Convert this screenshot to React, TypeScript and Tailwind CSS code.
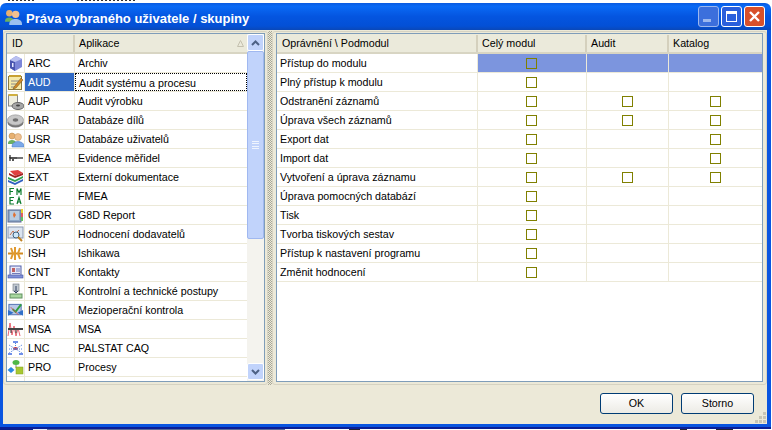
import React from "react";

function IconArc() { return <svg width="17" height="17" viewBox="0 0 17 17"><path d="M3 5 L9 1 L15 4 V12 L8 16 L3 13 Z" fill="#7c86d8"/><path d="M3 5 L8 7 V16 L3 13 Z" fill="#4a55b0"/><path d="M3 5 L9 1 L15 4 L8 7 Z" fill="#b9c0f0"/><rect x="5" y="8" width="1.5" height="4" fill="#e6e8ff"/></svg>; }
function IconAud() { return <svg width="17" height="17" viewBox="0 0 17 17"><rect x="1.5" y="2.5" width="13" height="13" fill="#f5e9a8" stroke="#8a7a40"/><path d="M2 1h12v2H2z" fill="#c8a030"/><path d="M4 7h8M4 10h6M4 13h5" stroke="#8a8a8a"/><path d="M7 13 L14 4 L16 6 L9 14 L6 15 Z" fill="#d08a2a" stroke="#6a4a10" strokeWidth=".5"/></svg>; }
function IconAup() { return <svg width="17" height="17" viewBox="0 0 17 17"><rect x="1.5" y="2" width="9" height="11" fill="#f0efe0" stroke="#888"/><path d="M1.5 1h9v2h-9z" fill="#d0b040"/><ellipse cx="11" cy="13" rx="6" ry="3.5" fill="#a8a8a8" stroke="#666"/><ellipse cx="11" cy="12.5" rx="2" ry="1" fill="#444"/></svg>; }
function IconPar() { return <svg width="18" height="17" viewBox="0 0 18 17"><ellipse cx="9" cy="10.5" rx="8.5" ry="5.5" fill="#777"/><ellipse cx="9" cy="8" rx="8.5" ry="5.5" fill="#c8c8c8" stroke="#8a8a8a" strokeWidth=".6"/><ellipse cx="9" cy="8" rx="3" ry="1.8" fill="#707070"/></svg>; }
function IconUsr() { return <svg width="17" height="17" viewBox="0 0 17 17"><circle cx="5" cy="5" r="3" fill="#e8b070" stroke="#b08040" strokeWidth=".5"/><path d="M1 12 C1 8 9 8 9 12 V13 H1 Z" fill="#6cb060"/><circle cx="11" cy="6" r="3.5" fill="#f0c090" stroke="#c09050" strokeWidth=".5"/><path d="M5 15 C5 9 17 9 17 15 V16 H5 Z" fill="#7aa8e8" stroke="#4a78c0" strokeWidth=".5"/></svg>; }
function IconMea() { return <svg width="17" height="17" viewBox="0 0 17 17"><path d="M2 7h14v2H7v2H5V9H3z" fill="#555"/><path d="M3 5v6" stroke="#222" strokeWidth="1.2"/><path d="M10 8h6" stroke="#999"/></svg>; }
function IconExt() { return <svg width="17" height="17" viewBox="0 0 17 17"><path d="M3 2 L11 1 L16 4 L8 7 Z" fill="#e04040"/><path d="M2 4 L8 7 V9 L2 6 Z M8 7 L16 4 V6 L8 9 Z" fill="#a02020"/><path d="M1 8 L8 11 L16 7 V9 L8 13 L1 10 Z" fill="#30a050"/><path d="M1 11 L8 14 L16 10 V12 L8 16 L1 13 Z" fill="#3060c0"/></svg>; }
function IconFme() { return <svg width="17" height="18" viewBox="0 0 17 18"><g stroke="#0a7a2a" strokeWidth="1.2" fill="none"><path d="M3 8V1.5h4M3 4.5h3"/><path d="M10 8V1.5l2 4 2-4V8"/><path d="M7 10.5H3V17h4M3 13.5h3"/><path d="M10 17l2-6.5 2 6.5M10.8 15h2.6"/></g></svg>; }
function IconGdr() { return <svg width="17" height="17" viewBox="0 0 17 17"><rect x="1" y="3" width="13" height="12" fill="#8ea8c8" stroke="#5a6a90"/><rect x="3" y="4" width="9" height="9" fill="#b8cce0"/><path d="M7 5 L9 8 L7 11 L6 8Z" fill="#e07030"/><rect x="14" y="2" width="2" height="4" fill="#e8d030"/><rect x="14" y="6" width="2" height="4" fill="#e06060"/><rect x="14" y="10" width="2" height="4" fill="#60c060"/></svg>; }
function IconSup() { return <svg width="17" height="17" viewBox="0 0 17 17"><rect x="1" y="1" width="15" height="11" fill="#dbe4f0" stroke="#8a98b0"/><path d="M3 9 L6 5 L8 8 L12 4" stroke="#c07050" fill="none"/><circle cx="9" cy="9" r="3" fill="#d0e8f8" stroke="#406080"/><path d="M11 11l4 4" stroke="#c08020" strokeWidth="2"/></svg>; }
function IconIsh() { return <svg width="17" height="17" viewBox="0 0 17 17"><path d="M1 8.5h15" stroke="#d08a20" strokeWidth="2"/><path d="M4 3l2 5.5L4 14M8 2v13M13 3l-2 5.5 2 5.5" stroke="#e09a30" strokeWidth="2" fill="none"/></svg>; }
function IconCnt() { return <svg width="17" height="17" viewBox="0 0 17 17"><rect x="3" y="2" width="11" height="11" fill="#e8e8f8" stroke="#5060a8"/><rect x="1" y="11" width="15" height="3" fill="#8090d8" stroke="#4050a0" strokeWidth=".6"/><rect x="5" y="4" width="3" height="4" fill="#c06060"/><path d="M9 5h4M9 7h4M5 9.5h8" stroke="#5060a8" strokeWidth=".8"/></svg>; }
function IconTpl() { return <svg width="17" height="17" viewBox="0 0 17 17"><rect x="6" y="1" width="6" height="7" fill="#c0c8d0" stroke="#707880" strokeWidth=".6"/><path d="M9 3v7M7 8l2 2 2-2" stroke="#304060" fill="none"/><rect x="3" y="11" width="12" height="4" fill="#a8d8a0" stroke="#609060"/></svg>; }
function IconIpr() { return <svg width="18" height="17" viewBox="0 0 18 17"><rect x="2" y="2" width="13" height="11" fill="#b8c8e8" stroke="#5070b0"/><path d="M1 8 L7 11 L1 14Z M17 8 L11 11 L17 14Z" fill="#3070c8"/><path d="M6 7l3 3 6-8" stroke="#30a040" strokeWidth="2" fill="none"/><path d="M4 5l8 8" stroke="#d05050"/></svg>; }
function IconMsa() { return <svg width="17" height="17" viewBox="0 0 17 17"><path d="M1 15 L3 2 L5 14 L7 5 L9 15 L11 7 L13 15" stroke="#e04050" fill="none" strokeWidth=".8"/><path d="M1 7h15v2H1z" fill="#444"/><path d="M4 9v3M9 9v3" stroke="#333"/></svg>; }
function IconLnc() { return <svg width="17" height="17" viewBox="0 0 17 17"><ellipse cx="8.5" cy="8.5" rx="2.5" ry="1.5" fill="#d03030"/><g stroke="#5080e0" strokeDasharray="1 1" fill="none"><path d="M8.5 3v3M2 5l13 8M15 5L2 13M2 9h13"/></g><rect x="6" y="1" width="5" height="2" fill="#7090e8"/><rect x="1" y="13" width="4" height="2" fill="#7090e8"/><rect x="12" y="13" width="4" height="2" fill="#7090e8"/></svg>; }
function IconPro() { return <svg width="17" height="17" viewBox="0 0 17 17"><ellipse cx="9" cy="3.5" rx="3.5" ry="2.5" fill="#50b848"/><path d="M9 6v3" stroke="#888"/><path d="M4 8 L7.5 11 L4 14 L.5 11Z" fill="#2a8ae0"/><rect x="9" y="8" width="7" height="7" fill="#a8c830" stroke="#80a020" strokeWidth=".5"/></svg>; }

const apps: [React.ReactNode, string, string][] = [
  [<IconArc />, "ARC", "Archiv"],
  [<IconAud />, "AUD", "Audit systému a procesu"],
  [<IconAup />, "AUP", "Audit výrobku"],
  [<IconPar />, "PAR", "Databáze dílů"],
  [<IconUsr />, "USR", "Databáze uživatelů"],
  [<IconMea />, "MEA", "Evidence měřidel"],
  [<IconExt />, "EXT", "Externí dokumentace"],
  [<IconFme />, "FME", "FMEA"],
  [<IconGdr />, "GDR", "G8D Report"],
  [<IconSup />, "SUP", "Hodnocení dodavatelů"],
  [<IconIsh />, "ISH", "Ishikawa"],
  [<IconCnt />, "CNT", "Kontakty"],
  [<IconTpl />, "TPL", "Kontrolní a technické postupy"],
  [<IconIpr />, "IPR", "Mezioperační kontrola"],
  [<IconMsa />, "MSA", "MSA"],
  [<IconLnc />, "LNC", "PALSTAT CAQ"],
  [<IconPro />, "PRO", "Procesy"],
];

const perms: [string, number, number][] = [
  ["Přístup do modulu", 0, 0],
  ["Plný přístup k modulu", 0, 0],
  ["Odstranění záznamů", 1, 1],
  ["Úprava všech záznamů", 1, 1],
  ["Export dat", 0, 1],
  ["Import dat", 0, 1],
  ["Vytvoření a úprava záznamu", 1, 1],
  ["Úprava pomocných databází", 0, 0],
  ["Tisk", 0, 0],
  ["Tvorba tiskových sestav", 0, 0],
  ["Přístup k nastavení programu", 0, 0],
  ["Změnit hodnocení", 0, 0],
];

function Check() {
  return <span className="block h-[11px] w-[11px] border border-[#808000]" />;
}

function HeadCell({ w, children }: { w: string; children?: React.ReactNode }) {
  return <div className={`flex h-full shrink-0 items-center border-r-2 border-[#d4d0bd] pl-[4px] ${w}`}>{children}</div>;
}

function Splitter() {
  return <div className="w-[4px] shrink-0 bg-[repeating-conic-gradient(#a8a898_0_25%,#ece9d8_0_50%)] bg-[length:2px_2px]" />;
}

function Grip() {
  return (
    <div className="absolute right-[1px] bottom-[1px] grid grid-cols-3 gap-[1px]">
      <i className="col-start-3 block h-[3px] w-[3px] bg-[#c8c5b4]" />
      <i className="col-start-2 block h-[3px] w-[3px] bg-[#c8c5b4]" />
      <i className="block h-[3px] w-[3px] bg-[#c8c5b4]" />
      <i className="block h-[3px] w-[3px] bg-[#c8c5b4]" />
      <i className="block h-[3px] w-[3px] bg-[#c8c5b4]" />
      <i className="block h-[3px] w-[3px] bg-[#c8c5b4]" />
    </div>
  );
}

export default function App() {
  return (
    <div className="flex h-[430px] w-[772px] flex-col overflow-hidden bg-white font-['Liberation_Sans',sans-serif] text-[10.7px] text-black">
      {/* top edge of the page behind the window */}
      <div className="h-[3px] shrink-0 bg-white">
        <div className="flex h-[2px] gap-[41px] pl-[8px]">
          <i className="block h-[1px] w-[28px] bg-[repeating-linear-gradient(90deg,#333_0_2px,#fff_2px_4px)]" />
          <i className="block h-[1px] w-[60px] bg-[repeating-linear-gradient(90deg,#333_0_2px,#fff_2px_4px)]" />
        </div>
      </div>
      <div className="mr-[1px] flex h-[27px] shrink-0 items-center rounded-t-[6px] bg-[linear-gradient(180deg,#0a5ae0_0%,#0a6af5_12%,#0455e0_50%,#0350d6_85%,#0a48b8_100%)] pr-[6px] pl-[4px]">
        <svg width="18" height="18" viewBox="0 0 17 17" className="mt-[1px] mr-[4px] shrink-0">
          <circle cx="5" cy="5" r="3" fill="#e8b070" />
          <path d="M1 12 C1 8 9 8 9 12 V13 H1 Z" fill="#6cb060" />
          <circle cx="11" cy="6" r="3.5" fill="#f0c090" />
          <path d="M5 15 C5 9 17 9 17 15 V16 H5 Z" fill="#9cc0f0" />
        </svg>
        <span className="mt-[5px] flex-1 text-[13px] font-bold text-white">Práva vybraného uživatele / skupiny</span>
        <div className="flex gap-[2px]">
          <div className="flex h-[21px] w-[21px] items-end rounded-[3px] border border-[#9db8ee] bg-[#3c6fdc] p-[4px]">
            <span className="h-[3px] w-[8px] bg-[#9db8ee]" />
          </div>
          <div className="flex h-[21px] w-[21px] items-center justify-center rounded-[3px] border border-white bg-[#2a5fdc]">
            <span className="h-[11px] w-[11px] border border-t-[3px] border-white" />
          </div>
          <div className="flex h-[21px] w-[21px] items-center justify-center rounded-[3px] border border-white bg-[#d8502a]">
            <svg width="13" height="13" viewBox="0 0 13 13"><path d="M2 2l9 9M11 2l-9 9" stroke="#fff" strokeWidth="2.4" /></svg>
          </div>
        </div>
      </div>

      <div className="mr-[1px] flex min-h-0 flex-1 border-r-[4px] border-b-[3px] border-l-[3px] border-[#0a55e0] bg-[#ece9d8]">
        <div className="relative flex min-w-0 flex-1 flex-col pt-[1px]">
          <div className="flex h-[354px] shrink-0">
            {/* left group */}
            <div className="flex h-full w-[265px] shrink-0 rounded-[3px] border border-[#d6d3c2] pt-[1px] pr-[2px] pb-[2px] pl-[2px]">
              <div className="flex min-w-0 flex-1 overflow-hidden border border-[#7f9db9] bg-white">
                <div className="flex min-w-0 flex-1 flex-col">
                  <div className="flex h-[20px] shrink-0 items-center border-b-2 border-[#d8d5c3] bg-[#ebeadb] pt-[1px]">
                    <HeadCell w="w-[68px]"><span className="pl-[1px]">ID</span></HeadCell>
                    <div className="flex h-full flex-1 items-center justify-between pr-[3px] pl-[4px]">
                      <span>Aplikace</span>
                      <svg width="7" height="7" viewBox="0 0 7 7"><path d="M3.5 .5L6.5 6.5H.5Z" fill="none" stroke="#c4c0ae" /></svg>
                    </div>
                  </div>
                  <div className="min-h-0 flex-1 overflow-hidden">
                    {apps.map(([ic, id, name], i) => (
                      <div key={id} className="flex h-[19px] border-b border-[#ece9d8]">
                        <div className="flex w-[18px] shrink-0 items-center justify-center border-r border-[#ece9d8]">{ic}</div>
                        <div className={`w-[50px] shrink-0 border-r border-[#ece9d8] pl-[3px] leading-[18px] ${i === 1 ? "bg-[#316ac5] text-white" : ""}`}>{id}</div>
                        <div className={`flex-1 pl-[3px] leading-[18px] ${i === 1 ? "border border-dotted border-black pl-[2px] leading-[16px]" : ""}`}>{name}</div>
                      </div>
                    ))}
                    <div className="flex h-[19px]">
                      <div className="w-[18px] border-r border-[#ece9d8]" />
                      <div className="w-[50px] border-r border-[#ece9d8]" />
                    </div>
                  </div>
                </div>
                {/* scrollbar */}
                <div className="flex w-[17px] shrink-0 flex-col bg-[#f4f3ee] pb-[1px]">
                  <div className="flex h-[17px] shrink-0 items-center justify-center rounded-[2px] border border-white bg-[#c1d3fb]">
                    <svg width="9" height="6" viewBox="0 0 9 6"><path d="M1 5l3.5-3.5L8 5" stroke="#4d6185" strokeWidth="2" fill="none" /></svg>
                  </div>
                  <div className="flex h-[188px] shrink-0 items-center justify-center rounded-[2px] border border-[#a0b8f0] bg-[#c1d3fb]">
                    <span className="flex h-[8px] w-[7px] flex-col justify-between">
                      <i className="block h-[1px] bg-[#eef4fe]" />
                      <i className="block h-[1px] bg-[#eef4fe]" />
                      <i className="block h-[1px] bg-[#eef4fe]" />
                      <i className="block h-[1px] bg-[#eef4fe]" />
                    </span>
                  </div>
                  <div className="flex-1" />
                  <div className="flex h-[17px] shrink-0 items-center justify-center rounded-[2px] border border-white bg-[#c1d3fb]">
                    <svg width="9" height="6" viewBox="0 0 9 6"><path d="M1 1l3.5 3.5L8 1" stroke="#4d6185" strokeWidth="2" fill="none" /></svg>
                  </div>
                </div>
              </div>
            </div>

            <Splitter />

            {/* right group */}
            <div className="flex h-full min-w-0 flex-1 rounded-[3px] border border-[#d6d3c2] pt-[1px] pr-[3px] pb-[2px] pl-[3px]">
              <div className="flex min-w-0 flex-1 flex-col overflow-hidden border border-[#7f9db9] bg-white">
                <div className="flex h-[20px] shrink-0 items-center border-b-2 border-[#d8d5c3] bg-[#ebeadb] pt-[1px]">
                  <HeadCell w="w-[201px]"><span className="pl-[1px]">Oprávnění \ Podmodul</span></HeadCell>
                  <HeadCell w="w-[109px]">Celý modul</HeadCell>
                  <HeadCell w="w-[82px]">Audit</HeadCell>
                  <div className="flex h-full flex-1 items-center pl-[4px]">Katalog</div>
                </div>
                {perms.map(([name, a, k], i) => (
                  <div key={name} className="flex h-[19px] border-b border-[#ece9d8]">
                    <div className="w-[201px] shrink-0 border-r border-[#ece9d8] pl-[3px] leading-[18px]">{name}</div>
                    <div className={`flex w-[109px] shrink-0 items-center justify-center border-r border-[#ece9d8] pr-[1px] ${i === 0 ? "bg-[#7c95de]" : ""}`}><Check /></div>
                    <div className={`flex w-[82px] shrink-0 items-center justify-center border-r border-[#ece9d8] ${i === 0 ? "bg-[#7c95de]" : ""}`}>{a ? <Check /> : null}</div>
                    <div className={`flex flex-1 items-center justify-center ${i === 0 ? "bg-[#7c95de]" : ""}`}>{k ? <Check /> : null}</div>
                  </div>
                ))}
              </div>
            </div>
          </div>

          {/* footer */}
          <div className="flex flex-1 items-start justify-end gap-[8px] pt-[8px] pr-[13px]">
            <button className="h-[21px] w-[73px] rounded-[3px] border border-[#003c74] bg-[linear-gradient(180deg,#ffffff,#ecebe5)]">OK</button>
            <button className="h-[21px] w-[73px] rounded-[3px] border border-[#003c74] bg-[linear-gradient(180deg,#ffffff,#ecebe5)]">Storno</button>
          </div>
          <Grip />
        </div>
      </div>
      <div className="mr-[1px] h-[2px] shrink-0 bg-[#0a1f96]" />
      <div className="h-[1px] shrink-0 bg-[linear-gradient(90deg,#0a1f8a_0_33px,#e8ecf8_33px_47px,#5a6a9a_47px_285px,#ffffff_285px_349px,#223_349px_360px,#ffffff_360px_680px,#223_680px_687px,#ffffff_687px_716px,#223_716px_733px,#ffffff_733px)]" />
    </div>
  );
}
